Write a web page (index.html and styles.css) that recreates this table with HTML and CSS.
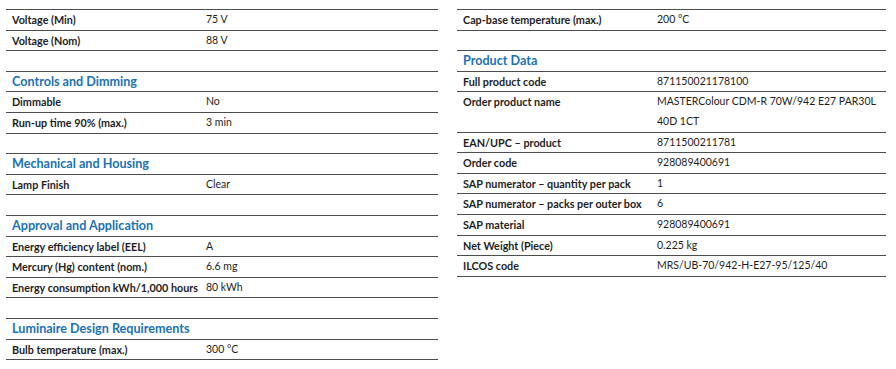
FILE: index.html
```html
<!DOCTYPE html>
<html lang="en">
<head>
<meta charset="utf-8">
<title>Product specifications</title>
<link rel="stylesheet" href="styles.css">
</head>
<body>
<div class="page">
  <div class="col">
    <section class="block">
      <div class="row"><div class="k">Voltage (Min)</div><div class="v">75 V</div></div>
      <div class="row"><div class="k">Voltage (Nom)</div><div class="v">88 V</div></div>
    </section>
    <section class="block">
      <h2 class="head">Controls and Dimming</h2>
      <div class="row"><div class="k">Dimmable</div><div class="v">No</div></div>
      <div class="row"><div class="k">Run-up time 90% (max.)</div><div class="v">3 min</div></div>
    </section>
    <section class="block">
      <h2 class="head">Mechanical and Housing</h2>
      <div class="row"><div class="k">Lamp Finish</div><div class="v">Clear</div></div>
    </section>
    <section class="block">
      <h2 class="head">Approval and Application</h2>
      <div class="row"><div class="k">Energy efficiency label (EEL)</div><div class="v">A</div></div>
      <div class="row"><div class="k">Mercury (Hg) content (nom.)</div><div class="v">6.6 mg</div></div>
      <div class="row"><div class="k">Energy consumption kWh/1,000 hours</div><div class="v">80 kWh</div></div>
    </section>
    <section class="block">
      <h2 class="head">Luminaire Design Requirements</h2>
      <div class="row"><div class="k">Bulb temperature (max.)</div><div class="v">300 °C</div></div>
    </section>
  </div>
  <div class="col">
    <section class="block">
      <div class="row"><div class="k">Cap-base temperature (max.)</div><div class="v">200 °C</div></div>
    </section>
    <section class="block">
      <h2 class="head">Product Data</h2>
      <div class="row"><div class="k">Full product code</div><div class="v">871150021178100</div></div>
      <div class="row"><div class="k">Order product name</div><div class="v wrap">MASTERColour CDM-R 70W/942 E27 PAR30L 40D 1CT</div></div>
      <div class="row"><div class="k">EAN/UPC – product</div><div class="v">8711500211781</div></div>
      <div class="row"><div class="k">Order code</div><div class="v">928089400691</div></div>
      <div class="row"><div class="k">SAP numerator – quantity per pack</div><div class="v">1</div></div>
      <div class="row"><div class="k">SAP numerator – packs per outer box</div><div class="v">6</div></div>
      <div class="row"><div class="k">SAP material</div><div class="v">928089400691</div></div>
      <div class="row"><div class="k">Net Weight (Piece)</div><div class="v">0.225 kg</div></div>
      <div class="row"><div class="k">ILCOS code</div><div class="v">MRS/UB-70/942-H-E27-95/125/40</div></div>
    </section>
  </div>
</div>
</body>
</html>
```
FILE: styles.css
```css
html, body {
  margin: 0;
  padding: 0;
  background: #ffffff;
}
body {
  font-family: Lato, "Open Sans", "Liberation Sans", sans-serif;
  color: #1e1e1e;
}
.page {
  display: flex;
  gap: 19px;
  padding: 9px 10px 0 6px;
  align-items: flex-start;
}
.col {
  display: flex;
  flex-direction: column;
  gap: 19.6px;
}
.col:first-child { width: 432px; }
.col:last-child { width: 429px; }
.block {
  border-top: 1px solid #4d4d4d;
}
.head {
  margin: 0;
  box-sizing: border-box;
  height: 20.6px;
  line-height: 19px;
  padding-left: 6px;
  font-size: 12.6px;
  font-weight: 700;
  color: #1a72b5;
  border-bottom: 1px solid #4d4d4d;
}
.row {
  display: grid;
  grid-template-columns: 200px 1fr;
  box-sizing: border-box;
  min-height: 20.6px;
  border-bottom: 1px solid #4d4d4d;
  line-height: 19.6px;
}
.k {
  padding-left: 6px;
  font-size: 10.8px;
  font-weight: 700;
}
.v {
  font-size: 10.5px;
  font-weight: 400;
}
.v.wrap {
  max-width: 222px;
}
```
